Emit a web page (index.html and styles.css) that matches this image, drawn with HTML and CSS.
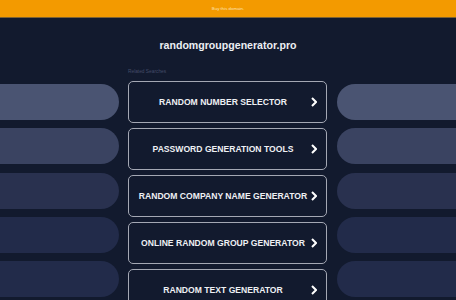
FILE: index.html
```html
<!DOCTYPE html>
<html lang="en">
<head>
    <meta charset="UTF-8">
    <meta name="viewport" content="width=device-width, initial-scale=1.0">
    <title>randomgroupgenerator.pro</title>
    <link rel="stylesheet" href="styles.css">
</head>
<body>
    <div class="topbar">
        <a class="buy" href="#">Buy this domain.</a>
    </div>

    <h1 class="domain">randomgroupgenerator.pro</h1>

    <div class="layout">
        <div class="side side-left">
            <div class="pill p1"></div>
            <div class="pill p2"></div>
            <div class="pill p3"></div>
            <div class="pill p4"></div>
            <div class="pill p5"></div>
        </div>

        <div class="main">
            <div class="related">Related Searches</div>
            <a class="link" href="#">
                <span class="label">RANDOM NUMBER SELECTOR</span>
                <svg class="chev" viewBox="0 0 6 10"><polyline points="1,1 5,5 1,9"/></svg>
            </a>
            <a class="link" href="#">
                <span class="label">PASSWORD GENERATION TOOLS</span>
                <svg class="chev" viewBox="0 0 6 10"><polyline points="1,1 5,5 1,9"/></svg>
            </a>
            <a class="link" href="#">
                <span class="label">RANDOM COMPANY NAME GENERATOR</span>
                <svg class="chev" viewBox="0 0 6 10"><polyline points="1,1 5,5 1,9"/></svg>
            </a>
            <a class="link" href="#">
                <span class="label">ONLINE RANDOM GROUP GENERATOR</span>
                <svg class="chev" viewBox="0 0 6 10"><polyline points="1,1 5,5 1,9"/></svg>
            </a>
            <a class="link" href="#">
                <span class="label">RANDOM TEXT GENERATOR</span>
                <svg class="chev" viewBox="0 0 6 10"><polyline points="1,1 5,5 1,9"/></svg>
            </a>
        </div>

        <div class="side side-right">
            <div class="pill p1"></div>
            <div class="pill p2"></div>
            <div class="pill p3"></div>
            <div class="pill p4"></div>
            <div class="pill p5"></div>
        </div>
    </div>
</body>
</html>
```

FILE: styles.css
```css
html, body {
    margin: 0;
    padding: 0;
    background: #121a2e;
    font-family: 'Liberation Sans', Arial, sans-serif;
    overflow: hidden;
}
.topbar {
    height: 17px;
    background: #f39a00;
    border-bottom: 1px solid #7d6232;
    display: flex;
    align-items: center;
    justify-content: center;
}
.buy {
    font-size: 4.4px;
    color: #fde3b8;
    text-decoration: none;
}
.domain {
    margin: 0;
    padding-top: 21px;
    height: 31px;
    font-size: 10.6px;
    font-weight: bold;
    color: #eceef3;
    text-align: center;
}
.layout {
    display: flex;
}
.side {
    display: flex;
    flex-direction: column;
    gap: 8.3px;
    padding-top: 14px;
}
.side-left {
    width: 119px;
    margin-right: 9px;
}
.side-right {
    flex: 1;
    margin-left: 10px;
}
.pill {
    height: 36px;
}
.side-left .pill {
    border-radius: 0 18px 18px 0;
}
.side-right .pill {
    border-radius: 18px 0 0 18px;
}
.p1 { background: #4a5472; }
.p2 { background: #3a4361; }
.p3 { background: #29314f; }
.p4 { background: #222b4a; }
.p5 { background: #222b4a; }

.main {
    width: 199px;
    display: flex;
    flex-direction: column;
    gap: 5px;
}
.related {
    font-size: 4.8px;
    color: #444c69;
    height: 6px;
    line-height: 6px;
    margin-top: -1px;
    margin-bottom: 1px;
}
.link {
    box-sizing: border-box;
    height: 42px;
    border: 1.5px solid #a4a8b4;
    border-radius: 5px;
    display: flex;
    align-items: center;
    padding: 0 9px 0 9px;
    text-decoration: none;
    color: #eef0f4;
}
.label {
    flex: 1;
    text-align: center;
    font-size: 8.6px;
    font-weight: bold;
    white-space: nowrap;
}
.chev {
    width: 6px;
    height: 10px;
    margin-left: 3px;
    fill: none;
    stroke: #ffffff;
    stroke-width: 2;
}
```
